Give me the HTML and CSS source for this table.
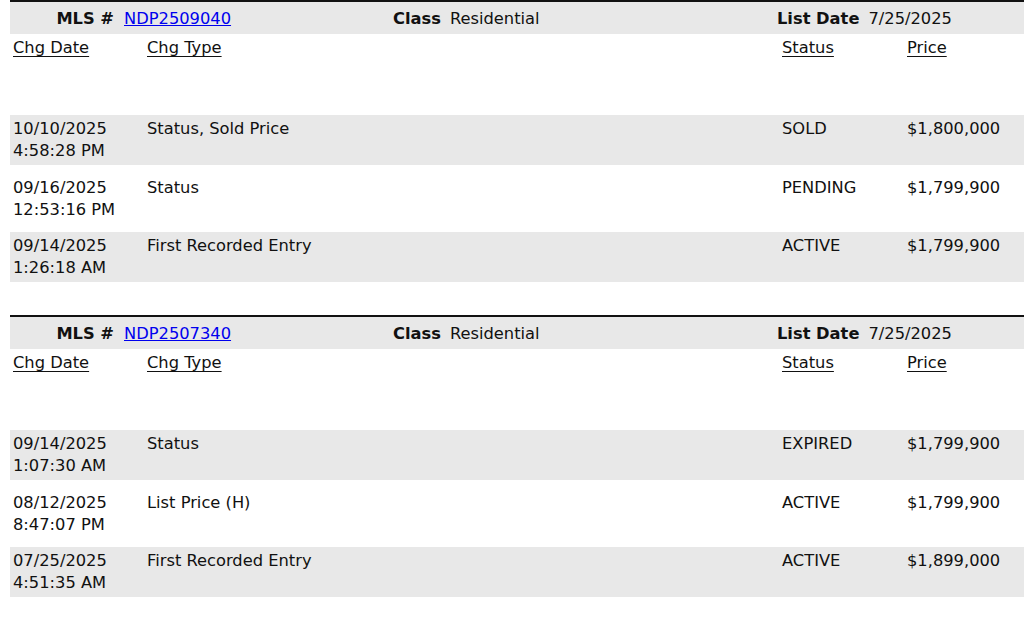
FILE: index.html
```html
<!DOCTYPE html>
<html>
<head>
<meta charset="utf-8">
<link rel="stylesheet" href="styles.css">
</head>
<body>
<section class="block">
  <div class="bar">
    <div class="grp grp-mls"><span class="lbl lbl-mls">MLS #</span><a href="#" class="link">NDP2509040</a></div>
    <div class="grp"><span class="lbl">Class</span><span>Residential</span></div>
    <div class="grp"><span class="lbl">List Date</span><span>7/25/2025</span></div>
  </div>
  <div class="row head">
    <div class="c"><u>Chg Date</u></div>
    <div class="c"><u>Chg Type</u></div>
    <div class="c"><u>Status</u></div>
    <div class="c"><u>Price</u></div>
  </div>
  <div class="rows">
    <div class="row data alt">
      <div class="c">10/10/2025<br>4:58:28 PM</div>
      <div class="c">Status, Sold Price</div>
      <div class="c">SOLD</div>
      <div class="c">$1,800,000</div>
    </div>
    <div class="row data">
      <div class="c">09/16/2025<br>12:53:16 PM</div>
      <div class="c">Status</div>
      <div class="c">PENDING</div>
      <div class="c">$1,799,900</div>
    </div>
    <div class="row data alt">
      <div class="c">09/14/2025<br>1:26:18 AM</div>
      <div class="c">First Recorded Entry</div>
      <div class="c">ACTIVE</div>
      <div class="c">$1,799,900</div>
    </div>
  </div>
</section>
<section class="block">
  <div class="bar">
    <div class="grp grp-mls"><span class="lbl lbl-mls">MLS #</span><a href="#" class="link">NDP2507340</a></div>
    <div class="grp"><span class="lbl">Class</span><span>Residential</span></div>
    <div class="grp"><span class="lbl">List Date</span><span>7/25/2025</span></div>
  </div>
  <div class="row head">
    <div class="c"><u>Chg Date</u></div>
    <div class="c"><u>Chg Type</u></div>
    <div class="c"><u>Status</u></div>
    <div class="c"><u>Price</u></div>
  </div>
  <div class="rows">
    <div class="row data alt">
      <div class="c">09/14/2025<br>1:07:30 AM</div>
      <div class="c">Status</div>
      <div class="c">EXPIRED</div>
      <div class="c">$1,799,900</div>
    </div>
    <div class="row data">
      <div class="c">08/12/2025<br>8:47:07 PM</div>
      <div class="c">List Price (H)</div>
      <div class="c">ACTIVE</div>
      <div class="c">$1,799,900</div>
    </div>
    <div class="row data alt">
      <div class="c">07/25/2025<br>4:51:35 AM</div>
      <div class="c">First Recorded Entry</div>
      <div class="c">ACTIVE</div>
      <div class="c">$1,899,000</div>
    </div>
  </div>
</section>
</body>
</html>
```
FILE: styles.css
```css
html, body {
  margin: 0;
  padding: 0;
  background: #fff;
}
body {
  padding-left: 10px;
  font-family: "DejaVu Sans", Verdana, sans-serif;
  font-size: 16.3px;
  line-height: 22px;
  color: #111;
  overflow: hidden;
}
.block {
  border-top: 2px solid #111;
  padding-bottom: 33px;
}
.bar {
  background: #e8e8e8;
  height: 32px;
  padding-top: 6px;
  box-sizing: border-box;
  display: grid;
  grid-template-columns: 383px 384px 1fr;
}
.grp {
  display: flex;
  gap: 9px;
}
.grp-mls {
  gap: 10px;
}
.lbl {
  font-weight: bold;
}
.lbl-mls {
  width: 104px;
  text-align: right;
}
.link {
  color: #0000ee;
  text-decoration: underline;
}
.row {
  display: grid;
  grid-template-columns: 134px 635px 125px 1fr;
}
.c {
  padding-left: 3px;
}
.head {
  height: 81px;
  padding-top: 3px;
  box-sizing: border-box;
}
.head u {
  text-underline-offset: 3px;
}
.rows {
  display: flex;
  flex-direction: column;
  gap: 8.5px;
}
.data {
  height: 50px;
  padding-top: 3px;
  box-sizing: border-box;
}
.alt {
  background: #e8e8e8;
}
```
